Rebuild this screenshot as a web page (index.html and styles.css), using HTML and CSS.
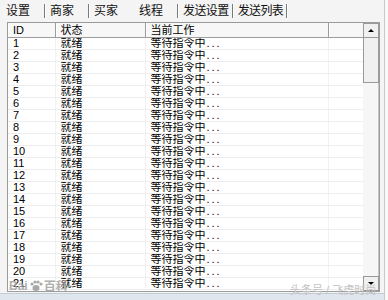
FILE: index.html
```html
<!DOCTYPE html>
<html>
<head>
<link rel="stylesheet" href="styles.css">
</head>
<body>

<div class="window">
  <div class="tabs">
    <span class="tab first">设置</span>
    <span class="sep"></span>
    <span class="tab">商家</span>
    <span class="sep"></span>
    <span class="tab">买家</span>
    <span class="tab active">线程</span>
    <span class="sep"></span>
    <span class="tab wide">发送设置</span>
    <span class="sep"></span>
    <span class="tab wide">发送列表</span>
    <span class="sep"></span>
  </div>

  <div class="list">
    <div class="grid">
      <table>
        <colgroup>
          <col class="c-id">
          <col class="c-state">
          <col class="c-work">
          <col class="c-rest">
        </colgroup>
        <thead>
          <tr>
            <th>ID</th>
            <th>状态</th>
            <th>当前工作</th>
            <th></th>
          </tr>
        </thead>
        <tbody id="thread-table"></tbody>
      </table>
    </div>
    <div class="scrollbar">
      <div class="btn"><span class="arrow up"></span></div>
      <div class="thumb"></div>
      <div class="track"></div>
      <div class="btn"><span class="arrow down"></span></div>
    </div>
  </div>

  <div class="status"></div>

  <div class="mark-left">Bai<svg width="14" height="12" viewBox="0 0 14 12"><ellipse cx="7" cy="8" rx="3.5" ry="3" fill="#9a9a9a"/><circle cx="3" cy="4" r="1.6" fill="#9a9a9a"/><circle cx="6" cy="2" r="1.6" fill="#9a9a9a"/><circle cx="9" cy="2" r="1.6" fill="#9a9a9a"/><circle cx="12" cy="4" r="1.6" fill="#9a9a9a"/></svg>百科</div>
  <div class="mark-right">头条号 / 飞虎时尚</div>
</div>

<script>
  var body = document.getElementById("thread-table");
  for (var i = 1; i <= 21; i++) {
    var row = document.createElement("tr");
    row.innerHTML = "<td>" + i + "</td><td>就绪</td><td>等待指令中<span class=\"dots\">...</span></td><td></td>";
    body.appendChild(row);
  }
</script>

</body>
</html>
```

FILE: styles.css
```css
body {
  margin: 0;
  background-color: #fafafa;
  font-family: "Liberation Sans", "Noto Sans CJK SC", sans-serif;
}

.window {
  position: relative;
  width: 384px;
  height: 300px;
  background-color: #f4f4f4;
  border-right: 1px solid #c9c9c9;
  overflow: hidden;
}

.tabs {
  display: flex;
  align-items: center;
  height: 22px;
  font-size: 12px;
  color: #111;
}

.tab {
  line-height: 20px;
}

.tab.wide {
  letter-spacing: -0.6px;
}

.tab.first {
  margin-left: 6px;
}

.tab.active {
  margin-left: 21px;
}

.sep {
  width: 1px;
  height: 14px;
  margin: 0 4px 0 14px;
  background-color: #7a7a7a;
  border-right: 1px solid #ffffff;
}

.tab.wide + .sep {
  margin-left: 3px;
}

.list {
  display: flex;
  margin-left: 7px;
  width: 371px;
  height: 268px;
  border: 1px solid #9b9b9b;
  background-color: #ffffff;
}

.grid {
  width: 355px;
  overflow: hidden;
}

table {
  table-layout: fixed;
  border-collapse: collapse;
  width: 355px;
  font-size: 11px;
}

.c-id { width: 47px; }
.c-state { width: 90px; }
.c-work { width: 183px; }
.c-rest { width: 35px; }

th {
  height: 14px;
  padding: 0 0 0 5px;
  font-weight: normal;
  text-align: left;
  line-height: 14px;
  background-color: #f7f7f7;
  border-right: 1px solid #9c9c9c;
  border-bottom: 1px solid #9c9c9c;
  box-shadow: inset 1px 0 0 #ffffff;
  white-space: nowrap;
}

th:last-child {
  border-right: none;
}

td {
  height: 11px;
  padding: 0 0 0 5px;
  line-height: 11px;
  border-right: 1px solid #f1f1f1;
  border-bottom: 1px solid #ededed;
  white-space: nowrap;
  overflow: hidden;
}

td:last-child {
  border-right: none;
}

.dots {
  letter-spacing: 2px;
  margin-left: 1px;
}

.scrollbar {
  display: flex;
  flex-direction: column;
  width: 16px;
  background-color: #f6f6f6;
}

.btn, .thumb {
  box-sizing: border-box;
  border: 1px solid #9a9a9a;
  background-color: #f0f0f0;
}

.btn {
  display: flex;
  align-items: center;
  justify-content: center;
  height: 15px;
}

.thumb {
  height: 45px;
  border-top: none;
}

.track {
  flex: 1;
  border-right: 1px solid #c4c4c4;
}

.arrow {
  width: 0;
  height: 0;
  border-left: 3px solid transparent;
  border-right: 3px solid transparent;
}

.arrow.up {
  border-bottom: 3px solid #000000;
}

.arrow.down {
  border-top: 3px solid #000000;
}

.status {
  margin-top: 1px;
  height: 8px;
  background-color: #dfe6ee;
  border-top: 1px solid #c3cbd4;
}

.mark-left {
  position: absolute;
  left: 9px;
  top: 277px;
  display: flex;
  align-items: center;
  font-size: 12px;
  font-weight: bold;
  color: #a2a2a2;
  opacity: 0.85;
}

.mark-left svg {
  margin: 0 1px;
}

.mark-right {
  position: absolute;
  left: 290px;
  top: 283px;
  font-size: 11px;
  line-height: 14px;
  white-space: nowrap;
  color: #c2c2c2;
}
```
